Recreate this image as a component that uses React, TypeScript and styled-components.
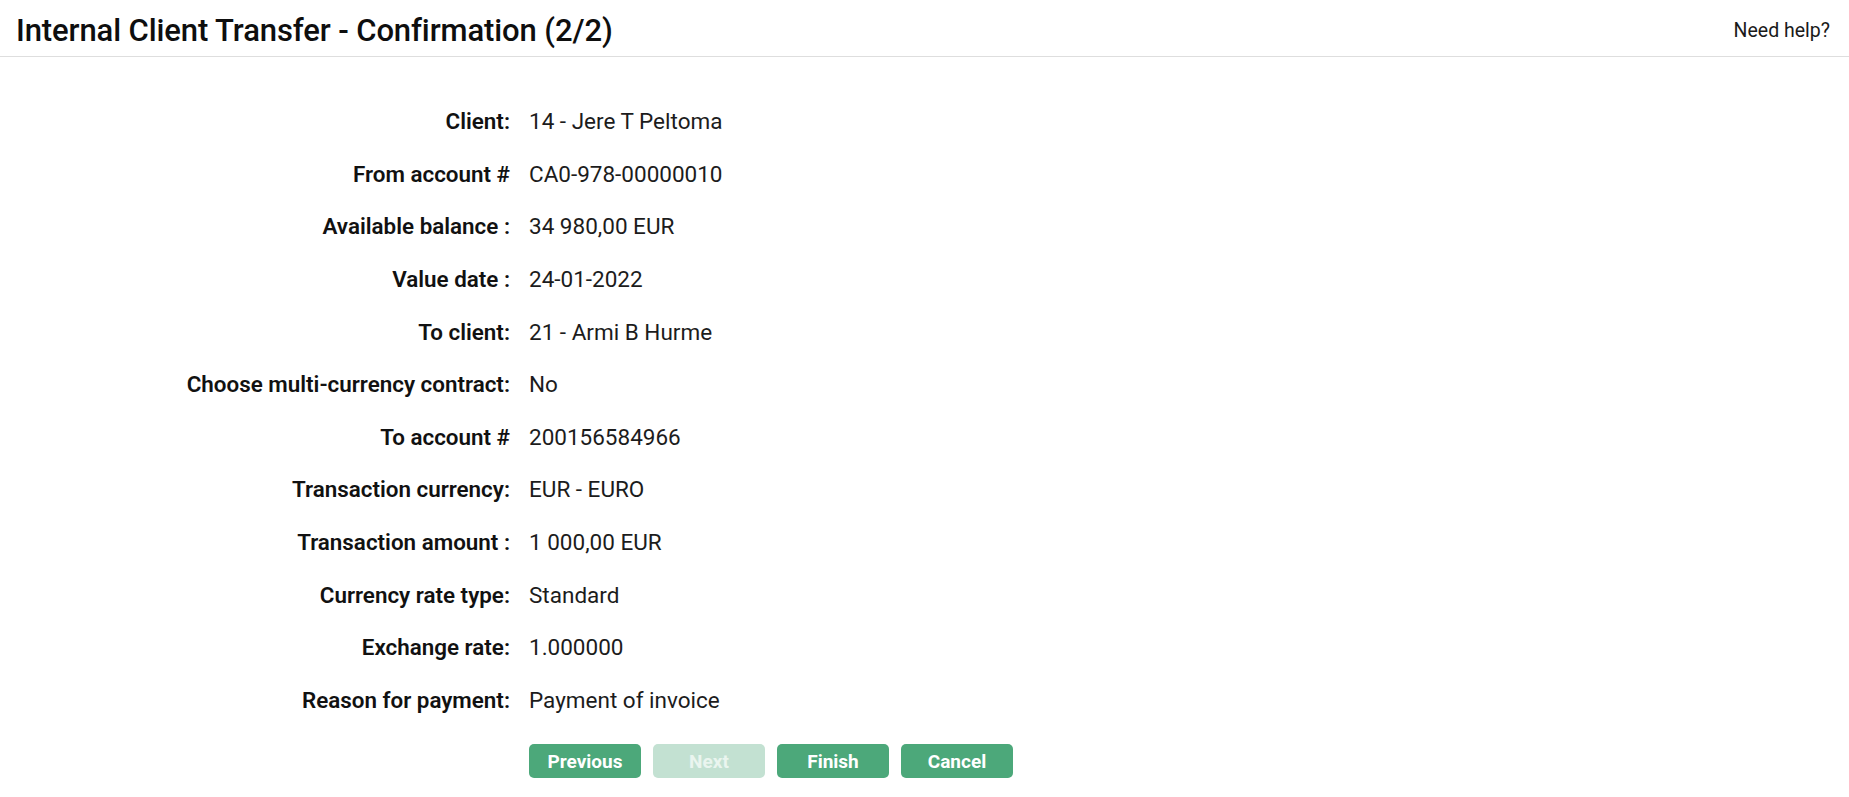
import React from "react";
import styled, { createGlobalStyle } from "styled-components";

const GlobalStyle = createGlobalStyle`
  html, body { margin: 0; padding: 0; background: #ffffff; }
  body { font-family: Roboto, "Noto Sans", "Liberation Sans", sans-serif; color: #111; }
`;

const Page = styled.div`
  width: 1849px;
  min-height: 797px;
  background: #fff;
`;

const Header = styled.header`
  height: 51px;
  display: flex;
  align-items: center;
  justify-content: space-between;
  padding: 5px 19px 0 16px;
  border-bottom: 1px solid #dedede;
  box-sizing: content-box;
`;

const Title = styled.h1`
  margin: 0;
  font-size: 31px;
  font-weight: 500;
  color: #0e0e0e;
  letter-spacing: -0.1px;
`;

const HelpLink = styled.a`
  font-size: 19.5px;
  color: #1a1a1a;
  text-decoration: none;
  cursor: pointer;
`;

const Form = styled.div`
  display: grid;
  grid-template-columns: 510px auto;
  column-gap: 19px;
  grid-auto-rows: 52.6px;
  padding-top: 38px;
  align-items: center;
`;

const Label = styled.div`
  text-align: right;
  font-size: 22.4px;
  font-weight: 600;
  color: #111;
`;

const Value = styled.div`
  font-size: 22.5px;
  font-weight: 400;
  color: #1c1c1c;
`;

const Actions = styled.div`
  display: flex;
  gap: 12px;
  padding: 18px 0 0 529px;
`;

const Button = styled.button<{ $disabled?: boolean }>`
  width: 112px;
  height: 34px;
  border: none;
  border-radius: 5px;
  background: ${(p) => (p.$disabled ? "#c3e1d2" : "#4ca87a")};
  color: ${(p) => (p.$disabled ? "#eaf5ef" : "#ffffff")};
  font-family: Roboto, "Noto Sans", sans-serif;
  font-size: 19px;
  font-weight: 700;
  cursor: ${(p) => (p.$disabled ? "default" : "pointer")};
  padding: 0;
`;

const rows: [string, string][] = [
  ["Client:", "14 - Jere T Peltoma"],
  ["From account #", "CA0-978-00000010"],
  ["Available balance :", "34 980,00 EUR"],
  ["Value date :", "24-01-2022"],
  ["To client:", "21 - Armi B Hurme"],
  ["Choose multi-currency contract:", "No"],
  ["To account #", "200156584966"],
  ["Transaction currency:", "EUR - EURO"],
  ["Transaction amount :", "1 000,00 EUR"],
  ["Currency rate type:", "Standard"],
  ["Exchange rate:", "1.000000"],
  ["Reason for payment:", "Payment of invoice"],
];

export default function App() {
  return (
    <Page>
      <GlobalStyle />
      <Header>
        <Title>Internal Client Transfer - Confirmation (2/2)</Title>
        <HelpLink>Need help?</HelpLink>
      </Header>
      <Form>
        {rows.map(([l, v]) => (
          <React.Fragment key={l}>
            <Label>{l}</Label>
            <Value>{v}</Value>
          </React.Fragment>
        ))}
      </Form>
      <Actions>
        <Button>Previous</Button>
        <Button $disabled>Next</Button>
        <Button>Finish</Button>
        <Button>Cancel</Button>
      </Actions>
    </Page>
  );
}
